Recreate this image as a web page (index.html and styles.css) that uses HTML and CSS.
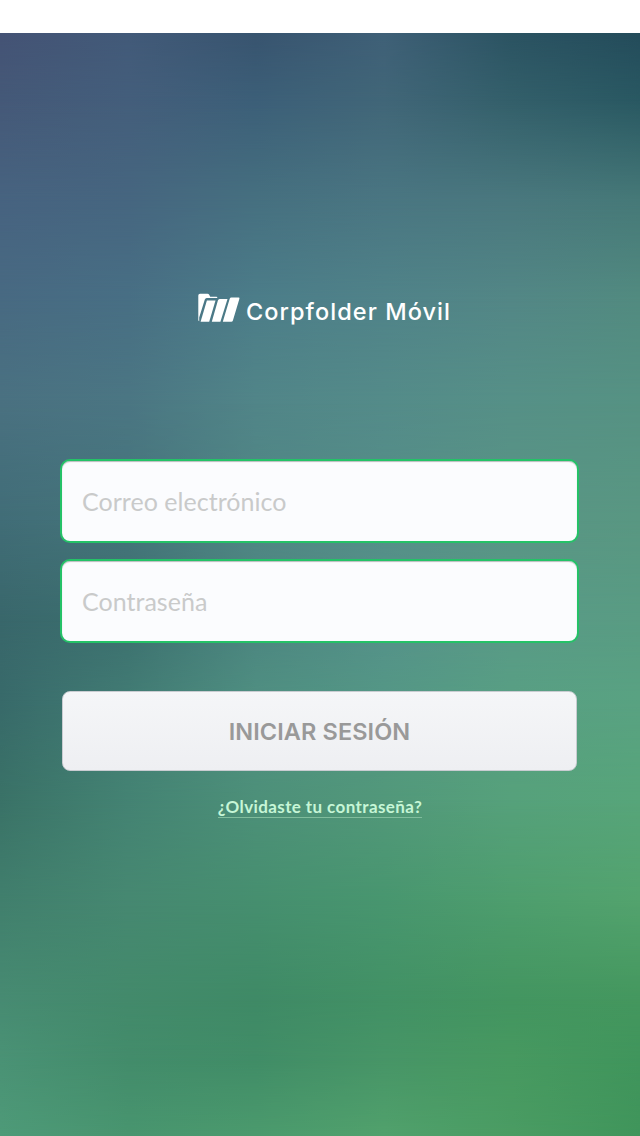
FILE: index.html
```
<!DOCTYPE html>
<html lang="es">
<head>
<meta charset="utf-8">
<title>Corpfolder Móvil</title>
<link rel="stylesheet" href="styles.css">
</head>
<body>
<main class="screen">
  <div class="backdrop" aria-hidden="true">
    <i class="band b1"></i><i class="band b2"></i><i class="band b3"></i><i class="band b4"></i>
    <i class="band b5"></i><i class="band b6"></i><i class="band b7"></i><i class="band b8"></i>
    <i class="band b9"></i><i class="band b10"></i><i class="band b11"></i><i class="band b12"></i>
    <i class="band b13"></i>
  </div>
  <div class="content">
    <h1 class="brand">
      <svg class="logo" width="42" height="30" viewBox="0 0 42 30" fill="#fff" aria-hidden="true">
        <path d="M.3 27V2.5Q.3.8 2 .8h7.5q1.2 0 1.7 1l1 2h6.2q1.1 0 .9 1.2H8.8q-1.5 0-2 1.5L1.2 24.5V28.2Q.3 28 .3 27z"/>
        <path d="M8.9 7.6h8.6L11.2 28.8H2.6z"/>
        <path d="M21.6 6.1h7.9L22.4 28.8h-8.6L19.9 7.6q.4-1.5 1.7-1.5z"/>
        <path d="M33.4 4.4H40.6q1.2 0 .8 1.3L34.9 27.6q-.4 1.2-1.6 1.2h-8.5l6.9-23q.4-1.4 1.7-1.4z"/>
      </svg>
      <span class="brand-name">Corpfolder Móvil</span>
    </h1>
    <form class="login">
      <input class="field" type="text" placeholder="Correo electrónico">
      <input class="field" type="password" placeholder="Contraseña">
      <button class="submit" type="button"><span>INICIAR SESIÓN</span></button>
    </form>
    <a class="forgot">¿Olvidaste tu contraseña?</a>
  </div>
</main>
</body>
</html>
```
FILE: styles.css
```
* { box-sizing: border-box; }
body { margin: 0; background: #fff; font-family: Lato, "Open Sans", sans-serif; }
.screen { display: grid; height: 1136px; padding-top: 33px; overflow: hidden; }
.backdrop, .content { grid-area: 1 / 1; }
.backdrop { display: grid; height: 1103px; }

/* Each band fades in over the previous one, from --a to --b */
.band {
  grid-area: 1 / 1;
  -webkit-mask-image: linear-gradient(transparent var(--a), #000 var(--b));
  mask-image: linear-gradient(transparent var(--a), #000 var(--b));
}
.b1 { -webkit-mask-image: none; mask-image: none; background: linear-gradient(90deg, #445375, #425a79, #38546f, #3f6077, #2b5362, #244c5b); }
.b2 { --a: 0px; --b: 67px; background: linear-gradient(90deg, #455978, #445e7b, #3c5f78, #416678, #335f6a, #295862); }
.b3 { --a: 67px; --b: 167px; background: linear-gradient(90deg, #476380, #466680, #467080, #4a7682, #4a787e, #467978); }
.b4 { --a: 167px; --b: 267px; background: linear-gradient(90deg, #486a82, #486f84, #4c7d89, #508389, #538786, #528b80); }
.b5 { --a: 267px; --b: 367px; background: linear-gradient(90deg, #4a7181, #4b7683, #518588, #548b89, #569087, #569283); }
.b6 { --a: 367px; --b: 487px; background: linear-gradient(90deg, #416d77, #45757b, #508784, #558f88, #599585, #599782); }
.b7 { --a: 487px; --b: 587px; background: linear-gradient(90deg, #39676b, #3c706f, #4c8580, #55918a, #599a87, #599c83); }
.b8 { --a: 587px; --b: 667px; background: linear-gradient(90deg, #386a6a, #427c74, #4f8f81, #549785, #589f83, #59a282); }
.b9 { --a: 667px; --b: 767px; background: linear-gradient(90deg, #3a7267, #448373, #4d9079, #52987a, #56a17b, #57a57a); }
.b10 { --a: 767px; --b: 867px; background: linear-gradient(90deg, #417f6d, #468871, #468f6f, #48966f, #4e9e6e, #53a36e); }
.b11 { --a: 867px; --b: 967px; background: linear-gradient(90deg, #478b72, #438a6b, #3f8a66, #429165, #439560, #44975e); }
.b12 { --a: 967px; --b: 1027px; background: linear-gradient(90deg, #4a9275, #438c6b, #418d67, #479567, #479960, #40955c); }
.b13 { --a: 1027px; --b: 1103px; background: linear-gradient(90deg, #4e9a78, #48956f, #4b9a6d, #51a16c, #4a9c63, #40955b); }

.content { position: relative; display: flex; flex-direction: column; align-items: center; }
.brand { display: flex; gap: 6px; width: 252px; height: 34px; margin: 260px 0 0 8px; font-weight: 500; }
.logo { flex: none; }
.brand-name { font: 500 23.5px/37px Inter, sans-serif; letter-spacing: 1.07px; color: #fff; white-space: nowrap; }
.login { display: flex; flex-direction: column; width: 519px; margin: 132px 1px 0 0; }
.field {
  height: 84px; margin: 0 0 16px; padding: 0 20px; border: 2px solid #24c267; border-radius: 10px;
  outline: 0; background: #fbfcfe; box-shadow: inset 0 1px 1px #b8bcbc; color: #888;
  font: 400 25px Lato, sans-serif; letter-spacing: .03px;
}
.field::placeholder { color: #c9caca; opacity: 1; }
.submit {
  height: 80px; margin: 32px 2px 0; padding: 0; border: 1px solid #c9ccd1; border-radius: 8px;
  background: linear-gradient(#f5f6f8, #eeeff2); color: #999;
  font: 600 23.5px Inter, sans-serif; letter-spacing: .1px;
}
.forgot {
  height: 22px; margin-top: 25px; border-bottom: 1px solid #80bd9d; color: #c6f6d6;
  font: 700 17px/22px Lato, sans-serif; letter-spacing: .4px; white-space: nowrap;
}
```
